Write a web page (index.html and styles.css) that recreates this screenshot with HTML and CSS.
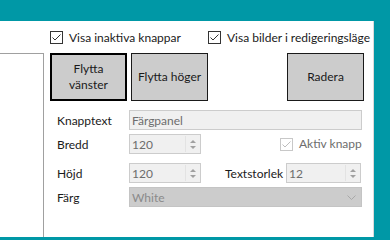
FILE: index.html
```html
<!DOCTYPE html>
<html>
<head>
<meta charset="utf-8">
<link rel="stylesheet" href="styles.css">
</head>
<body>
<div class="top"></div>
<div class="panel">
  <div class="sidebar"></div>
  <div class="content">
    <div class="checks">
      <label class="chk c1"><svg class="box" width="13" height="13" viewBox="0 0 13 13"><rect x="0.5" y="0.5" width="12" height="12" fill="#fff" stroke="#333"/><polyline points="2.5,6.5 5,9 10.5,3.5" fill="none" stroke="#333" stroke-width="1"/></svg><span>Visa inaktiva knappar</span></label>
      <label class="chk c2"><svg class="box" width="13" height="13" viewBox="0 0 13 13"><rect x="0.5" y="0.5" width="12" height="12" fill="#fff" stroke="#333"/><polyline points="2.5,6.5 5,9 10.5,3.5" fill="none" stroke="#333" stroke-width="1"/></svg><span>Visa bilder i redigeringsläge</span></label>
    </div>
    <div class="buttons">
      <div class="btn focused">Flytta<br>vänster</div>
      <div class="btn b2">Flytta höger</div>
      <div class="btn b3">Radera</div>
    </div>
    <div class="form">
      <div class="row r1">
        <div class="lbl">Knapptext</div>
        <div class="field wide">Färgpanel</div>
      </div>
      <div class="row r2">
        <div class="lbl">Bredd</div>
        <div class="field spin"><span class="val">120</span><span class="arrows"><i class="up"></i><i class="dn"></i></span></div>
        <label class="chk dis"><svg class="box" width="13" height="13" viewBox="0 0 13 13"><rect x="0.5" y="0.5" width="12" height="12" fill="#fff" stroke="#c8c8c8"/><polyline points="2.5,6.5 5,9 10.5,3.5" fill="none" stroke="#bdbdbd" stroke-width="1"/></svg><span>Aktiv knapp</span></label>
      </div>
      <div class="row r3">
        <div class="lbl">Höjd</div>
        <div class="field spin"><span class="val">120</span><span class="arrows"><i class="up"></i><i class="dn"></i></span></div>
        <div class="lbl2">Textstorlek</div>
        <div class="field spin s2"><span class="val">12</span><span class="arrows"><i class="up"></i><i class="dn"></i></span></div>
      </div>
      <div class="row r4">
        <div class="lbl">Färg</div>
        <div class="field combo"><span class="val">White</span><svg class="chev" width="9" height="5" viewBox="0 0 9 5"><polyline points="0.5,0.5 4.5,4.5 8.5,0.5" fill="none" stroke="#a8a8a8" stroke-width="1"/></svg></div>
      </div>
    </div>
  </div>
</div>
</body>
</html>
```
FILE: styles.css
```css
html, body {
  margin: 0;
  padding: 0;
  background: #0098a6;
  width: 390px;
  height: 237px;
  overflow: hidden;
  font-family: Lato, "Liberation Sans", sans-serif;
  font-size: 12px;
  color: #1a1a1a;
  white-space: nowrap;
}
.top {
  height: 21px;
}
.panel {
  width: 373px;
  height: 216px;
  background: #fff;
  border-right: 1px solid #dadada;
  display: flex;
}
.sidebar {
  width: 43px;
  margin-top: 32px;
  border-top: 1px solid #a0a0a0;
  border-right: 1px solid #a0a0a0;
}
.content {
  margin-left: 6px;
  flex: 1;
  display: flex;
  flex-direction: column;
}
.checks {
  height: 32px;
  display: flex;
  align-items: flex-start;
}
.chk {
  display: flex;
  align-items: center;
  line-height: 13px;
}
.chk .box {
  flex: none;
}
.chk span {
  margin-left: 6px;
  margin-top: -1px;
}
.c1 {
  margin-top: 10px;
  width: 158px;
  flex: none;
}
.c2 {
  margin-top: 10px;
  flex: none;
}
.buttons {
  display: flex;
  height: 48px;
}
.btn {
  box-sizing: border-box;
  width: 77px;
  height: 48px;
  background: #cccccc;
  border: 1px solid #1a1a1a;
  display: flex;
  align-items: center;
  justify-content: center;
  text-align: center;
  line-height: 16px;
  flex: none;
}
.btn.focused {
  border: 2px solid #000;
}
.b2 {
  margin-left: 4px;
}
.b3 {
  margin-left: 79px;
}
.form {
  margin-top: 9px;
  display: flex;
  flex-direction: column;
}
.row {
  display: flex;
  align-items: center;
  height: 20px;
}
.r2 { margin-top: 4px; }
.r3 { margin-top: 9px; }
.r4 { margin-top: 4px; }
.lbl {
  width: 79px;
  padding-left: 7px;
  box-sizing: border-box;
  flex: none;
}
.field {
  box-sizing: border-box;
  height: 20px;
  background: #f0f0f0;
  border: 1px solid #cccccc;
  color: #6d6d6d;
  padding-left: 2px;
  display: flex;
  align-items: center;
  flex: none;
}
.wide {
  width: 233px;
}
.spin {
  width: 72px;
  justify-content: space-between;
}
.arrows {
  width: 13px;
  height: 16px;
  margin-right: 1px;
  display: flex;
  flex-direction: column;
  align-items: center;
  justify-content: center;
  gap: 3px;
  background: #f0f0f0;
  border-left: 1px solid #e3e3e3;
}
.arrows i {
  width: 0;
  height: 0;
  border-left: 3px solid transparent;
  border-right: 3px solid transparent;
}
.arrows .up {
  border-bottom: 3px solid #a0a0a0;
}
.arrows .dn {
  border-top: 3px solid #a0a0a0;
}
.dis {
  margin-left: 79px;
  color: #6d6d6d;
}
.lbl2 {
  margin-left: 24px;
  width: 61px;
  flex: none;
}
.s2 {
  width: 75px;
}
.combo {
  width: 233px;
  background: #cccccc;
  border-color: #c4c4c4;
  color: #8a8a8a;
  justify-content: space-between;
}
.chev {
  margin-right: 5px;
}
```
